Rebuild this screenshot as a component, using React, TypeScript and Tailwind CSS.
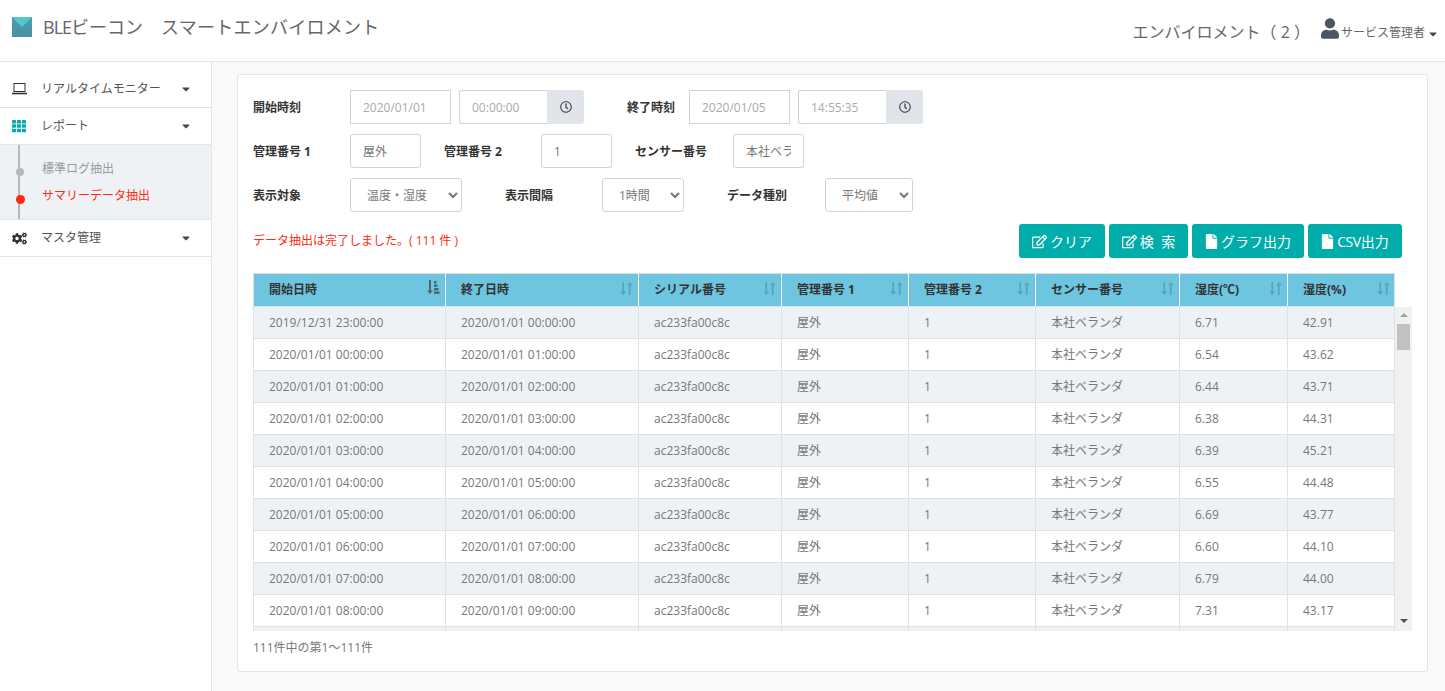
import React from "react";
import { FaRegClock, FaUser, FaRegEdit, FaFile, FaCogs, FaTh, FaCaretDown } from "react-icons/fa";

const font = "font-['Open_Sans','Noto_Sans_CJK_JP',sans-serif]";
const cols = "grid grid-cols-[192px_193px_143px_127px_127px_144px_108px_107px]";

const times = [
  ["2019/12/31 23:00:00", "2020/01/01 00:00:00", "6.71", "42.91"],
  ["2020/01/01 00:00:00", "2020/01/01 01:00:00", "6.54", "43.62"],
  ["2020/01/01 01:00:00", "2020/01/01 02:00:00", "6.44", "43.71"],
  ["2020/01/01 02:00:00", "2020/01/01 03:00:00", "6.38", "44.31"],
  ["2020/01/01 03:00:00", "2020/01/01 04:00:00", "6.39", "45.21"],
  ["2020/01/01 04:00:00", "2020/01/01 05:00:00", "6.55", "44.48"],
  ["2020/01/01 05:00:00", "2020/01/01 06:00:00", "6.69", "43.77"],
  ["2020/01/01 06:00:00", "2020/01/01 07:00:00", "6.60", "44.10"],
  ["2020/01/01 07:00:00", "2020/01/01 08:00:00", "6.79", "44.00"],
  ["2020/01/01 08:00:00", "2020/01/01 09:00:00", "7.31", "43.17"],
];

function SortIcon({ active }: { active?: boolean }) {
  if (active) {
    return (
      <svg width="13" height="14" viewBox="0 0 13 14" className="absolute right-[5px] top-[6px] text-[#4a6672]" fill="currentColor">
        <path d="M2 0h2v10.5h2L3 14 0 10.5h2z" />
        <rect x="7" y="1" width="2.5" height="2.4" />
        <rect x="7" y="4.5" width="3.5" height="2.4" />
        <rect x="7" y="8" width="4.5" height="2.4" />
        <rect x="7" y="11.5" width="5.5" height="2.4" />
      </svg>
    );
  }
  return (
    <svg width="13" height="13" viewBox="0 0 13 13" className="absolute right-[5px] top-[8px] text-[#55a5ba]" fill="currentColor">
      <path d="M2.4 0h1.7v9.5h2L3.2 13 .4 9.5h2z" />
      <path d="M8.9 13h1.7V3.5h2L9.8 0 7 3.5h1.9z" />
    </svg>
  );
}

function Label({ w, children }: { w: string; children: React.ReactNode }) {
  return <label className={`${w} shrink-0 pt-[2px] text-[12px] font-bold text-[#333]`}>{children}</label>;
}

const inputBase = "h-[34px] border border-[#ced4da] bg-white px-3 text-[12px] outline-none";
const dimInput = `${inputBase} text-[#aaa]`;
const textInput = `${inputBase} rounded-[3px] text-[#777]`;

function Clock() {
  return (
    <div className="flex h-[34px] w-[37px] items-center justify-center rounded-r-[3px] bg-[#e1e5e9] text-[#3f4a52]">
      <FaRegClock className="h-[12px] w-[12px]" />
    </div>
  );
}

function Sel({ w, text }: { w: string; text: string }) {
  return (
    <select
      defaultValue={text}
      className={`${w} h-[34px] rounded-[3px] border border-[#ced4da] bg-white pl-3 text-[12px] text-[#777] outline-none`}
    >
      <option>{text}</option>
    </select>
  );
}

function Btn({ w, icon, children }: { w: string; icon: React.ReactNode; children: React.ReactNode }) {
  return (
    <button className={`${w} flex h-[34px] items-center justify-center gap-[3px] rounded-[3px] bg-[#00adaa] text-[14px] text-white`}>
      {icon}
      <span>{children}</span>
    </button>
  );
}

function Nav({ icon, label, h }: { icon: React.ReactNode; label: string; h: string }) {
  return (
    <div className={`${h} flex items-center border-b border-[#e3e5e7] pl-[12px] pr-[20px] text-[12px] text-[#555]`}>
      <span className="flex w-[29px] shrink-0 items-center">{icon}</span>
      <span className="flex-1">{label}</span>
      <FaCaretDown className="h-[12px] w-[10px] text-[#3f464d]" />
    </div>
  );
}

export default function App() {
  const heads = ["開始日時", "終了日時", "シリアル番号", "管理番号 1", "管理番号 2", "センサー番号", "湿度(℃)", "湿度(%)"];
  return (
    <div className={`${font} flex h-[691px] w-[1445px] flex-col overflow-hidden bg-[#f9f9f9]`}>
      <header className="flex h-[62px] shrink-0 items-center justify-between border-b border-[#e3e5e7] bg-white pb-[7px] pl-[12px] pr-[7px]">
        <div className="flex items-center">
          <svg width="20" height="20" viewBox="0 0 20 20" className="mr-[11px]">
            <defs>
              <linearGradient id="lg" x1="0" y1="0" x2="0" y2="1">
                <stop offset="0" stopColor="#4a9fb0" />
                <stop offset="1" stopColor="#4b8fa3" />
              </linearGradient>
            </defs>
            <rect width="20" height="20" fill="url(#lg)" />
            <path d="M0 0h20L10 10z" fill="#55c9c9" />
          </svg>
          <span className="whitespace-pre text-[18px] text-[#666]">
            <span className="tracking-[-1px]">BLE</span>ビーコン　<span className="tracking-[0.25px]">スマートエンバイロメント</span>
          </span>
        </div>
        <div className="flex items-center">
          <span className="mt-[9px] whitespace-pre text-[16px] text-[#666]">エンバイロメント（ 2 ）</span>
          <FaUser className="ml-[11px] mt-[3px] h-[21px] w-[18px] text-[#4c5660]" />
          <span className="ml-[2px] mt-[12px] text-[12px] text-[#666]">サービス管理者</span>
          <FaCaretDown className="ml-[3px] mt-[13px] h-[12px] w-[10px] text-[#3f464d]" />
        </div>
      </header>
      <div className="flex min-h-0 flex-1">
        <aside className="w-[212px] shrink-0 border-r border-[#e3e5e7] bg-white pt-[9px]">
          <Nav
            h="h-[37px]"
            label="リアルタイムモニター"
            icon={
              <svg width="15" height="12" viewBox="0 0 15 12" fill="none" stroke="#333" strokeWidth="1">
                <rect x="2" y="0.5" width="11" height="8" />
                <path d="M0 10.5h15" strokeWidth="1.6" />
              </svg>
            }
          />
          <Nav h="h-[37px]" label="レポート" icon={<FaTh className="h-[14px] w-[14px] text-[#00adaa]" />} />
          <div className="relative h-[75px] border-b border-[#e3e5e7] bg-[#eff2f5] pl-[42px] pt-[15px] text-[12px]">
            <div className="absolute left-[18px] top-0 h-full w-[2px] bg-[#b5b8ba]" />
            <div className="absolute left-[16px] top-[23px] h-[8px] w-[8px] rounded-full bg-[#b5b8ba]" />
            <div className="absolute left-[16px] top-[50px] h-[9px] w-[9px] rounded-full bg-[#ff2a10]" />
            <div className="h-[27px] text-[#999]">標準ログ抽出</div>
            <div className="text-[#ff2a10]">サマリーデータ抽出</div>
          </div>
          <Nav h="h-[37px]" label="マスタ管理" icon={<FaCogs className="h-[15px] w-[15px] text-[#333]" />} />
        </aside>
        <main className="min-w-0 flex-1 pl-[25px] pr-[17px] pt-[12px]">
          <div className="h-[598px] rounded-[3px] border border-[#e3e5e7] bg-white pl-[15px] pt-[15px]">
            <div className="flex h-[34px] items-center">
              <Label w="w-[97px]">開始時刻</Label>
              <input readOnly value="2020/01/01" className={`${dimInput} w-[101px]`} />
              <div className="ml-[8px] flex">
                <input readOnly value="00:00:00" className={`${dimInput} w-[88px] rounded-l-[3px] border-r-0`} />
                <Clock />
              </div>
              <Label w="w-[62px] ml-[43px]">終了時刻</Label>
              <input readOnly value="2020/01/05" className={`${dimInput} w-[101px]`} />
              <div className="ml-[8px] flex">
                <input readOnly value="14:55:35" className={`${dimInput} w-[88px] rounded-l-[3px] border-r-0`} />
                <Clock />
              </div>
            </div>
            <div className="mt-[10px] flex h-[34px] items-center">
              <Label w="w-[97px]">管理番号 1</Label>
              <input readOnly value="屋外" className={`${textInput} w-[71px]`} />
              <Label w="w-[97px] ml-[23px]">管理番号 2</Label>
              <input readOnly value="1" className={`${textInput} w-[71px]`} />
              <Label w="w-[98px] ml-[23px]">センサー番号</Label>
              <input readOnly value="本社ベランダ" className={`${textInput} w-[71px]`} />
            </div>
            <div className="mt-[10px] flex h-[34px] items-center">
              <Label w="w-[97px]">表示対象</Label>
              <Sel w="w-[112px]" text="温度・湿度" />
              <Label w="w-[97px] ml-[43px]">表示間隔</Label>
              <Sel w="w-[82px]" text="1時間" />
              <Label w="w-[98px] ml-[43px]">データ種別</Label>
              <Sel w="w-[88px]" text="平均値" />
            </div>
            <div className="mt-[12px] flex h-[34px] items-center pr-[25px]">
              <span className="flex-1 text-[12px] text-[#ff2a10]">データ抽出は完了しました。( 111 件 )</span>
              <div className="flex gap-[4px]">
                <Btn w="w-[86px]" icon={<FaRegEdit className="h-[15px] w-[15px]" />}>クリア</Btn>
                <Btn w="w-[79px]" icon={<FaRegEdit className="h-[15px] w-[15px]" />}>{"検\u00a0\u00a0索"}</Btn>
                <Btn w="w-[112px]" icon={<FaFile className="h-[15px] w-[13px]" />}>グラフ出力</Btn>
                <Btn w="w-[94px]" icon={<FaFile className="h-[15px] w-[13px]" />}>
                  <span className="tracking-[-0.4px]">CSV</span>出力
                </Btn>
              </div>
            </div>
            <div className="mt-[15px] w-[1159px]">
              <div className={`${cols} h-[34px] w-[1142px] border border-[#dfe3e7] bg-[#6dc5df]`}>
                {heads.map((h, i) => (
                  <div key={h} className="relative flex items-center border-r border-white pl-[15px] text-[12px] font-bold text-[#333] last:border-r-0">
                    {h}
                    <SortIcon active={i === 0} />
                  </div>
                ))}
              </div>
              <div className="flex">
                <div className="h-[324px] w-[1142px] overflow-hidden">
                  {times.map((t, i) => (
                    <div key={t[0]} className={`${cols} h-[32px] border-x border-b border-[#dfe3e7] text-[12px] text-[#777] ${i % 2 === 0 ? "bg-[#eff2f5]" : "bg-white"}`}>
                      {[t[0], t[1], "ac233fa00c8c", "屋外", "1", "本社ベランダ", t[2], t[3]].map((c, j) => (
                        <div key={j} className="flex items-center border-r border-[#dfe3e7] pl-[15px] last:border-r-0">{c}</div>
                      ))}
                    </div>
                  ))}
                  <div className={`${cols} h-[32px] border-x border-[#dfe3e7] bg-[#eff2f5]`}>
                    {[0, 1, 2, 3, 4, 5, 6, 7].map((j) => (
                      <div key={j} className="border-r border-[#dfe3e7] last:border-r-0" />
                    ))}
                  </div>
                </div>
                <div className="flex h-[324px] w-[17px] flex-col items-center bg-[#f1f1f1]">
                  <div className="mt-[6px] h-0 w-0 border-x-[4px] border-b-[4px] border-x-transparent border-b-[#a3a3a3]" />
                  <div className="mt-[7px] h-[26px] w-[13px] bg-[#c1c1c1]" />
                  <div className="mb-[8px] mt-auto h-0 w-0 border-x-[4px] border-t-[4px] border-x-transparent border-t-[#505050]" />
                </div>
              </div>
              <div className="mt-[8px] text-[12px] text-[#777]">111件中の第1～111件</div>
            </div>
          </div>
        </main>
      </div>
    </div>
  );
}
